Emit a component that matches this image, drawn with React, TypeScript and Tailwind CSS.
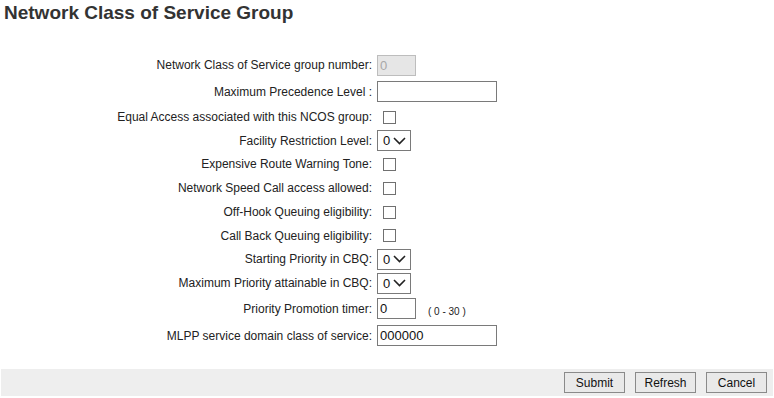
import * as React from "react";

type Row =
    | { label: string, kind: "disabled", value: string, h: string }
    | { label: string, kind: "text", value: string, h: string, width: string, hint?: string }
    | { label: string, kind: "check", h: string }
    | { label: string, kind: "select", h: string };

const rows: Row[] = [
    { label: "Network Class of Service group number:", kind: "disabled", value: "0", h: "h-[26px]" },
    { label: "Maximum Precedence Level :", kind: "text", value: "", h: "h-[27px]", width: "w-[120px]" },
    { label: "Equal Access associated with this NCOS group:", kind: "check", h: "h-[24px]" },
    { label: "Facility Restriction Level:", kind: "select", h: "h-[23px]" },
    { label: "Expensive Route Warning Tone:", kind: "check", h: "h-[24px]" },
    { label: "Network Speed Call access allowed:", kind: "check", h: "h-[24px]" },
    { label: "Off-Hook Queuing eligibility:", kind: "check", h: "h-[24px]" },
    { label: "Call Back Queuing eligibility:", kind: "check", h: "h-[23px]" },
    { label: "Starting Priority in CBQ:", kind: "select", h: "h-[24px]" },
    { label: "Maximum Priority attainable in CBQ:", kind: "select", h: "h-[24px]" },
    { label: "Priority Promotion timer:", kind: "text", value: "0", h: "h-[27px]", width: "w-[39px]", hint: "( 0 - 30 )" },
    { label: "MLPP service domain class of service:", kind: "text", value: "000000", h: "h-[27px]", width: "w-[120px]" },
];

function Control({ row }: { row: Row }) {
    if (row.kind === "disabled") {
        return (
            <div className="w-[39px] h-[21px] bg-[#e6e6e6] border border-[#bdbdbd] text-[#a8a8a8] text-[13px] leading-[19px] pl-[2px]">
                {row.value}
            </div>
        );
    }
    if (row.kind === "text") {
        return (
            <div className="flex items-center">
                <input
                    type="text"
                    defaultValue={row.value}
                    className={`${row.width} h-[21px] bg-white border border-[#7a7a7a] text-[13px] text-[#111] px-[2px] outline-none`}
                />
                {row.hint && <span className="ml-[12px] mt-[6px] text-[10px] text-[#222]">{row.hint}</span>}
            </div>
        );
    }
    if (row.kind === "check") {
        return <span className="ml-[6px] block w-[13px] h-[13px] bg-white border border-[#707070]" />;
    }
    return (
        <div className="flex items-center justify-between w-[34px] h-[21px] bg-white border border-[#7a7a7a] pl-[5px] pr-[4px]">
            <span className="text-[13px] leading-[19px] text-[#111]">0</span>
            <svg width="13" height="8" viewBox="0 0 13 8">
                <path d="M1 1 L6.5 6.5 L12 1" fill="none" stroke="#222" strokeWidth="1.6" />
            </svg>
        </div>
    );
}

export default function App() {
    return (
        <div className="w-[774px] h-[398px] bg-white font-['Liberation_Sans',Arial,sans-serif] text-[#222] relative">
            <h1 className="pl-[4px] pt-[1px] text-[19px] font-bold text-[#333] leading-[24px]">Network Class of Service Group</h1>

            <div className="mt-[27px] flex flex-col">
                {rows.map((row) => (
                    <div key={row.label} className={`flex items-center ${row.h}`}>
                        <div className="w-[373px] text-right text-[12px] pr-[1px]">{row.label}</div>
                        <div className="ml-[4px]">
                            <Control row={row} />
                        </div>
                    </div>
                ))}
            </div>

            <div className="mt-[20px] mx-[1px] h-[27px] bg-[#eeeeee] flex items-center justify-end gap-[10px] pr-[6px]">
                {["Submit", "Refresh", "Cancel"].map((b) => (
                    <button key={b} className="w-[61px] h-[21px] bg-[#e9e9e9] border border-[#8a8a8a] text-[12px] text-[#111]">
                        {b}
                    </button>
                ))}
            </div>
        </div>
    );
}
